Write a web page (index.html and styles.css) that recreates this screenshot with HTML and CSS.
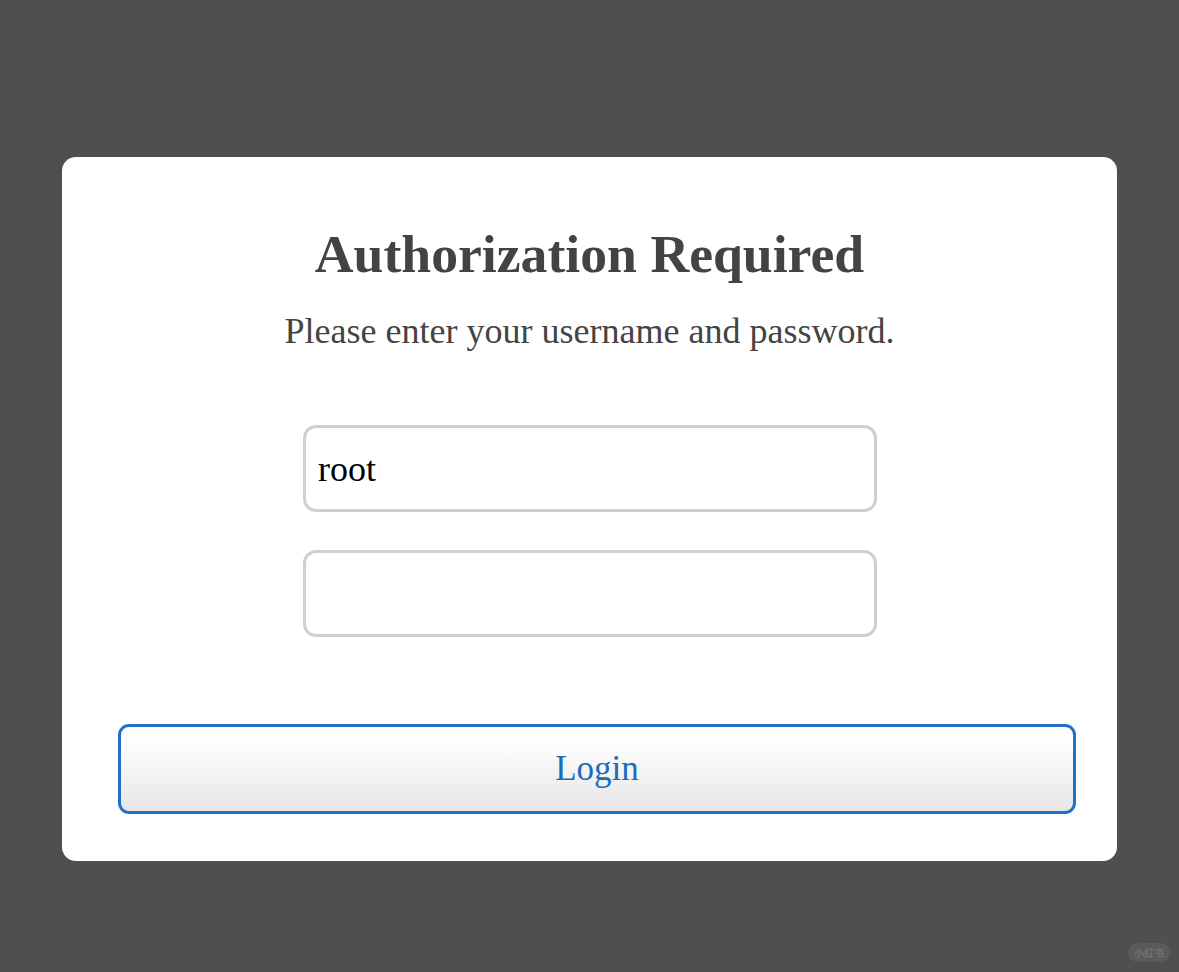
FILE: index.html
```html
<!DOCTYPE html>
<html lang="en">
<head>
<meta charset="utf-8">
<title>Authorization Required</title>
<link rel="stylesheet" href="styles.css">
</head>
<body>
<main class="card">
  <h1 class="title">Authorization Required</h1>
  <p class="subtitle">Please enter your username and password.</p>
  <form class="form">
    <div class="fields">
      <input class="field" type="text" value="root">
      <input class="field" type="password" value="">
    </div>
    <button class="login" type="button">Login</button>
  </form>
</main>
<div class="watermark">小红书</div>
</body>
</html>
```
FILE: styles.css
```css
html, body {
  margin: 0;
  padding: 0;
}
body {
  background: #4f4f4f;
  width: 1179px;
  height: 972px;
  overflow: hidden;
  font-family: "Liberation Serif", "Times New Roman", serif;
  padding-top: 157px;
  box-sizing: border-box;
  position: relative;
}
.card {
  margin-left: 62px;
  width: 1055px;
  height: 704px;
  box-sizing: border-box;
  background: #fff;
  border-radius: 14px;
  padding: 67px 41px 48px 56px;
  display: flex;
  flex-direction: column;
}
.title {
  margin: 0 -41px 0 -56px;
  font-size: 53.7px;
  line-height: 60px;
  font-weight: bold;
  color: #434343;
  text-align: center;
}
.subtitle {
  margin: 25px -41px 0 -56px;
  font-size: 36px;
  line-height: 44px;
  color: #444;
  text-align: center;
}
.form {
  display: flex;
  flex-direction: column;
  margin-top: 72px;
}
.fields {
  display: flex;
  flex-direction: column;
  align-items: center;
  gap: 38px;
  margin-left: -56px;
  margin-right: -41px;
}
.field {
  width: 574px;
  height: 87px;
  box-sizing: border-box;
  border: 3px solid #cfcfcf;
  border-radius: 13px;
  padding: 0 12px;
  font-family: "Liberation Serif", "Times New Roman", serif;
  font-size: 36px;
  color: #000;
  background: #fff;
  outline: none;
  margin-left: 1px;
}
.login {
  margin-top: 87px;
  height: 90px;
  width: 100%;
  box-sizing: border-box;
  border: 3px solid #1f70c6;
  border-radius: 11px;
  background: linear-gradient(to bottom, #ffffff 0%, #fbfbfb 30%, #e6e6e6 100%);
  font-family: "Liberation Serif", "Times New Roman", serif;
  font-size: 35px;
  color: #1b6cbf;
  padding: 0;
  cursor: pointer;
}
.watermark {
  position: absolute;
  right: 9px;
  bottom: 10px;
  width: 42px;
  height: 19px;
  border-radius: 10px;
  background: #5a5a5a;
  color: #727272;
  font-family: "Noto Sans CJK SC", sans-serif;
  font-size: 10px;
  line-height: 19px;
  text-align: center;
  font-weight: bold;
}
```
